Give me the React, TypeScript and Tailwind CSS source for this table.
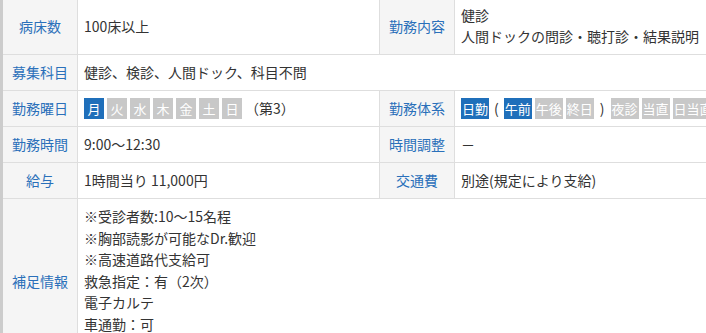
const label = "bg-[#f5f5f5] text-[#2a70ba] flex items-center justify-center py-[7px]"
const value = "bg-white px-[6px] py-[7px]"

function Day({ on, children }: { on?: boolean; children: string }) {
  return (
    <span
      className={
        "inline-flex h-[21px] w-[20px] items-center justify-center text-[13px] text-white " +
        (on ? "bg-[#1f6fba]" : "bg-[#c8c8c8]")
      }
    >
      {children}
    </span>
  )
}

function Shift({ on, children }: { on?: boolean; children: string }) {
  return (
    <span
      className={
        "inline-flex h-[21px] items-center px-[1px] text-[13px] text-white " +
        (on ? "bg-[#1f6fba]" : "bg-[#c8c8c8]")
      }
    >
      {children}
    </span>
  )
}

export default function App() {
  return (
    <div className="h-[333px] w-[706px] overflow-hidden bg-white font-['Noto_Sans_CJK_JP',sans-serif] text-[14px] leading-[21px] text-[#333]">
      <div className="-mt-[2px] grid w-[760px] grid-cols-[74px_301px_74px_1fr] gap-px border-l-[3px] border-[#cccccc] bg-[#dedede]">
        <div className={label}>病床数</div>
        <div className={value + " flex items-center"}>100床以上</div>
        <div className={label}>勤務内容</div>
        <div className={value}>
          <div>健診</div>
          <div>人間ドックの問診・聴打診・結果説明</div>
        </div>

        <div className={label}>募集科目</div>
        <div className={value + " col-span-3"}>健診、検診、人間ドック、科目不問</div>

        <div className={label}>勤務曜日</div>
        <div className={value + " flex items-center gap-[3px]"}>
          <Day on>月</Day>
          <Day>火</Day>
          <Day>水</Day>
          <Day>木</Day>
          <Day>金</Day>
          <Day>土</Day>
          <Day>日</Day>
          <span>（第3）</span>
        </div>
        <div className={label}>勤務体系</div>
        <div className={value + " flex items-center gap-[3px] whitespace-nowrap"}>
          <Shift on>日勤</Shift>
          <span className="px-[2px]">(</span>
          <Shift on>午前</Shift>
          <Shift>午後</Shift>
          <Shift>終日</Shift>
          <span className="px-[3px]">)</span>
          <Shift>夜診</Shift>
          <Shift>当直</Shift>
          <Shift>日当直</Shift>
        </div>

        <div className={label}>勤務時間</div>
        <div className={value}>9:00～12:30</div>
        <div className={label}>時間調整</div>
        <div className={value}>－</div>

        <div className={label}>給与</div>
        <div className={value}>1時間当り 11,000円</div>
        <div className={label}>交通費</div>
        <div className={value}>別途(規定により支給)</div>

        <div className={label}>補足情報</div>
        <div className={value + " col-span-3 pb-[28px] leading-[21.5px]"}>
          <div>※受診者数:10～15名程</div>
          <div>※胸部読影が可能なDr.歓迎</div>
          <div>※高速道路代支給可</div>
          <div>救急指定：有（2次）</div>
          <div>電子カルテ</div>
          <div>車通勤：可</div>
        </div>
      </div>
    </div>
  )
}
